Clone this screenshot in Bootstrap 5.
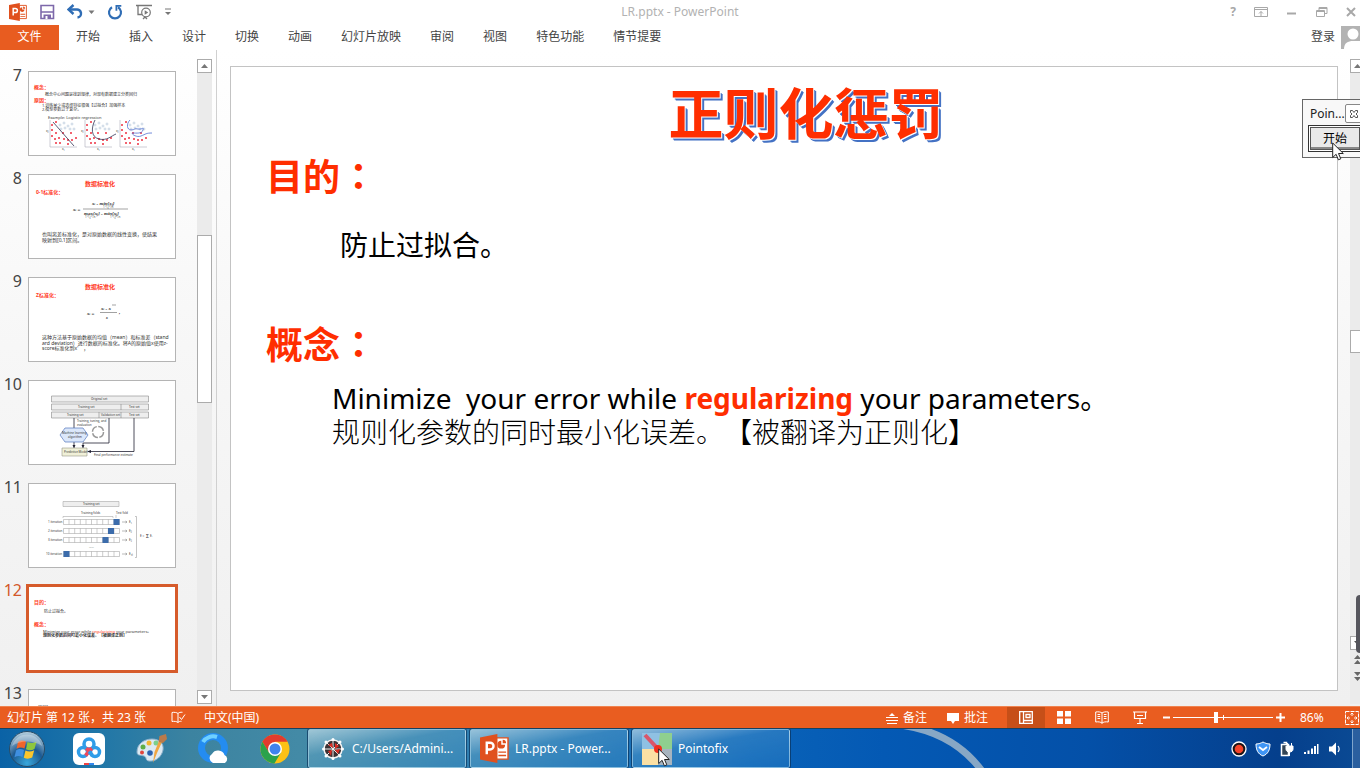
<!doctype html>
<html lang="zh-CN">
<head>
  <title>LR.pptx - PowerPoint</title>
  <meta charset="utf-8" />
  <meta name="viewport" content="width=device-width, initial-scale=1" />
  <link href="https://cdn.jsdelivr.net/npm/bootstrap@5.3.2/dist/css/bootstrap.min.css" rel="stylesheet" />
  <style>
    body { font-family: "Noto Sans", "Noto Sans CJK SC", sans-serif; font-size: 12px; line-height: 16px; color: #444; background: #fff; text-spacing-trim: space-all; }
    button { border: 0; background: none; padding: 0; color: inherit; }
    svg { display: block; flex: none; }

    /* title bar and ribbon tabs */
    .titlebar { display: grid; grid-template-columns: 1fr auto 1fr; height: 24px; align-items: center; }
    .doc-title { color: #b2b2b2; }
    .quick { gap: 12px; padding-left: 9px; }
    .win-btns { gap: 14px; color: #a8a8a8; }
    .tabs { height: 26px; gap: 29px; }
    .tabs a { color: #444; text-decoration: none; }
    .tabs .file-tab { width: 59px; height: 25px; line-height: 24px; margin-right: -12px; background: #e85c20; color: #fff; text-align: center; }
    .login { gap: 6px; }

    /* slide list */
    .workspace { min-height: 0; background: linear-gradient(#fff, #f7f7f7 45%, #f0f0f0); }
    .thumbs { width: 197px; padding-top: 16px; overflow: hidden; }
    .thumb-row { height: 103px; gap: 6px; }
    .thumb-num { width: 22px; font-size: 16px; line-height: 18px; text-align: right; }
    .thumb-btn { width: 148px; height: 85px; margin-top: 5px; background: #fff; border: 1px solid #b4b4b4; flex: none; }
    .thumb-row.current .thumb-num { color: #d2572a; }
    .thumb-row.current .thumb-btn { border-color: #d65b2b; outline: 2px solid #d65b2b; }
    .thumb-btn text { font-size: 4px; fill: #333; }
    .thumb-btn .t-h { font-size: 6px; font-weight: 700; fill: #ff3b1f; }
    .thumb-btn .t-r { font-size: 5px; font-weight: 700; fill: #ff3b1f; }
    .thumb-btn .t-b { font-size: 5px; }
    .thumb-btn .t-s { font-size: 3px; }
    .thumb-btn .t-f { font-family: "Liberation Serif", serif; font-style: italic; font-size: 5px; font-weight: 700; }

    /* scroll bars */
    .scroller { width: 15px; margin: 9px 4px 2px 0; background: #ebebeb; }
    .scroller button, .scroll-knob { background: #fff; border: 1px solid #ababab; }
    .scroller button { height: 14px; }
    .scroll-knob { height: 168px; }
    .track-above { flex: 9; }
    .track-below { flex: 16; }
    .vscroll { width: 10px; overflow: hidden; }
    .vscroll .scroll-knob { width: 15px; height: 23px; }
    .vscroll button { width: 15px; }
    .vscroll .track-above { flex: 10; }
    .vscroll .track-below { flex: 11; }

    /* slide */
    .stage { border-left: 1px solid #d0d0d0; padding: 16px 12px 15px 13px; min-width: 0; }
    .slide { background: #fff; border: 1px solid #c3c3c3; padding: 12px 35px; color: #000; font-size: 28px; line-height: 34px; overflow: hidden; }
    .slide h1 { font-size: 55px; line-height: 68px; font-weight: 700; color: #ff2e00; text-shadow: 1px 1px 0 #fff, 2px 2px 0 #4472c4, 3px 3px 0 #4472c4; padding-left: 44px; margin: 0 0 3px; }
    .slide h2 { font-size: 37px; line-height: 50px; font-weight: 700; color: #ff2e00; margin: 0; }
    .full-colon { font-family: "Noto Sans CJK TC", sans-serif; }
    .aim { padding-left: 74px; margin: 26px 0 56px; }
    .concept { padding-left: 66px; margin-top: 11px; white-space: pre; }
    .concept strong { color: #ff2e00; }
    .thin-line { font-weight: 300; }

    /* floating Pointofix window */
    .pointofix { position: absolute; left: calc(100% - 58px); top: 99px; width: 66px; height: 59px; padding: 4px 5px; background: #f8f8f8; border: 1px solid #666; color: #222; }
    .pointofix .win-name { padding-left: 2px; }
    .pointofix .close-box { width: 20px; height: 19px; border: 1px solid #888; border-radius: 2px; background: #fff; padding-left: 4px; }
    .pointofix .start-btn { width: 54px; height: 27px; margin-top: 2px; border: 1px solid #333; background: #e9e9e9; color: #000; box-shadow: inset 0 0 0 1px #fff, inset 0 0 0 2px #555, inset 0 -4px 0 #888; }
    .float-cursor { position: absolute; left: calc(100% - 28px); top: 142px; }
    .side-grip { position: absolute; left: calc(100% - 4px); top: 595px; width: 8px; height: 58px; border-radius: 4px; background: #55555c; }

    /* status bar */
    .statusbar { height: 22px; padding-right: 1px; background: #e95d20; color: #fff; border-top: 1px solid #f0834f; }
    .status-left { padding-left: 7px; gap: 18px; }
    .page-count { min-width: 146px; }
    .status-notes { gap: 20px; margin-right: 19px; }
    .status-notes button { gap: 5px; }
    .view-btn { width: 38px; height: 21px; }
    .view-btn.on { background: #c64f18; }
    .zoom-step { width: 14px; height: 21px; }
    .zoom-slider { -webkit-appearance: none; appearance: none; width: 100px; height: 11px; margin: 0; background: linear-gradient(#fff, #fff) 50% 5px / 100% 1px no-repeat, linear-gradient(#fff, #fff) 50% 50% / 1px 5px no-repeat; }
    .zoom-slider::-webkit-slider-thumb { -webkit-appearance: none; width: 4px; height: 11px; background: #fff; border: 0; }
    .zoom-val { width: 58px; padding-left: 13px; }

    /* taskbar */
    .taskbar { height: 40px; border-top: 1px solid #17405f; color: #fff; background: linear-gradient(90deg, #0a62a6 0, #1f76a8 7%, #3c83a0 14%, #438aa6 22%, #2a7cb4 38%, #0a63b8 55%, #0459b4 65%, #0450a8 80%, #053f8c 94%, #0a4a94); overflow: hidden; }
    .launch { gap: 8px; margin-right: 6px; }
    .launch button { width: 54px; height: 39px; }
    .task-btns { gap: 4px; }
    .task-btn { width: 158px; height: 39px; gap: 6px; padding-left: 9px; border: 1px solid rgba(190, 225, 240, .6); border-radius: 2px; outline: 1px solid rgba(10, 50, 90, .7); background: linear-gradient(170deg, rgba(220, 238, 245, .6), rgba(130, 190, 220, .25) 40%, rgba(80, 160, 210, .2)); }
    .wallpaper-arc { margin-left: 100px; }
    .tray { gap: 8px; margin-right: 9px; }
    .show-desktop { width: 8px; height: 39px; border-left: 1px solid #7fa5cc; background: #2a5f9f; }
    .task-cursor { position: absolute; left: 658px; top: 748px; }
  </style>
</head>
<body class="d-flex flex-column vh-100 overflow-hidden position-relative">

  <svg width="0" height="0" class="position-absolute" aria-hidden="true">
    <defs>
      <symbol id="cursor" viewBox="0 0 12 19"><path d="M.7 1v14.5l3.4-3.2 2.3 5.5 2.4-1-2.3-5.3h4.8z" fill="#fff" stroke="#222" stroke-width="1"/></symbol>
      <symbol id="ppt" viewBox="0 0 30 30">
        <path d="M17 4h12v22H17z" fill="#fff" stroke="#e0501e" stroke-width="1.5"/>
        <path d="M22 7a4 4 0 1 0 4 4h-4zM23.500 6v3.500H27A3.500 3.500 0 0 0 23.500 6M19 18h8v1.500h-8zM19 21.500h8V23h-8z" fill="#e0501e"/>
        <path d="M0 3.500 18 0v30L0 26.500z" fill="#e0501e"/>
        <path d="M7 21V9h3.500a3.500 3.500 0 0 1 0 7H7" fill="none" stroke="#fff" stroke-width="2.500"/>
      </symbol>
      <symbol id="crosses" viewBox="0 0 30 30">
        <path d="M1 0v27h27" fill="none" stroke="#99a" stroke-width=".5"/>
        <path d="M2 4l2 2m0-2-2 2M6 1l2 2m0-2-2 2M2 9l2 2m0-2-2 2M2 15l2 2m0-2-2 2M6 12l2 2m0-2-2 2M5 18l2 2m0-2-2 2M9 17l2 2m0-2-2 2M6 22l2 2m0-2-2 2M10 22l2 2m0-2-2 2M14 18l2 2m0-2-2 2M18 19l2 2m0-2-2 2M18 23l2 2m0-2-2 2M22 19l2 2m0-2-2 2M26 17l2 2m0-2-2 2M13 12l2 2m0-2-2 2M21 12l2 2m0-2-2 2" stroke="#f0515f" stroke-width=".9"/>
        <g fill="none" stroke="#9db4cf" stroke-width=".5"><circle cx="11" cy="5" r="1"/><circle cx="15" cy="3" r="1"/><circle cx="19" cy="6" r="1"/><circle cx="16" cy="8" r="1"/><circle cx="23" cy="4" r="1"/><circle cx="21" cy="9" r="1"/><circle cx="25" cy="9" r="1"/><circle cx="12" cy="9" r="1"/></g>
      </symbol>
      <symbol id="fold" viewBox="0 0 58 6">
        <path d="M.5.500h56v5H.5zM6 .5v5M11.700 .5v5M17.300 .5v5M23 .5v5M28.500 .5v5M34 .5v5M39.700 .5v5M45.300 .5v5M51 .5v5" fill="#fff" stroke="#999" stroke-width=".5"/>
      </symbol>
    </defs>
  </svg>

  <header>
    <div class="titlebar">
      <div class="d-flex align-items-center quick">
        <svg width="18" height="18" aria-hidden="true"><use href="#ppt"/></svg>
        <button aria-label="保存"><svg width="16" height="16" viewBox="0 0 16 16"><path d="M2 1.500h12.500v13H2z" fill="#fff" stroke="#7d68aa" stroke-width="1.600"/><path d="M2 8h12" stroke="#7d68aa" stroke-width="1.500"/><path d="M4.500 10.500h7.500V15H4.500z" fill="#7d68aa"/><path d="M6.500 12h2v3h-2z" fill="#fff"/></svg></button>
        <button aria-label="撤消" class="d-flex align-items-center"><svg width="28" height="16" viewBox="0 0 28 16"><path d="M3 5.500h6.500a4 4 0 0 1 1 8" fill="none" stroke="#2f6db5" stroke-width="2.400"/><path d="M6.500 1 1.500 5.500l5 4.500" fill="none" stroke="#2f6db5" stroke-width="2.400"/><path d="M21.500 6.500h6L24.500 10z" fill="#777"/></svg></button>
        <button aria-label="重复"><svg width="16" height="16" viewBox="0 0 16 16"><path d="M5 3.200a6 6 0 1 0 6 0" fill="none" stroke="#2f6db5" stroke-width="2.200"/><path d="M8.500 1h5.800v1.800h-4v4H8.500z" fill="#2f6db5"/></svg></button>
        <button aria-label="从头开始放映"><svg width="18" height="16" viewBox="0 0 18 16"><path d="M1 1.500h16M3 2v8.500h4M8 15l2-2 2 2" fill="none" stroke="#777" stroke-width="1.300"/><circle cx="11" cy="8.500" r="4.300" fill="#fff" stroke="#777" stroke-width="1.200"/><path d="M9.700 6.200v4.600l3.500-2.300z" fill="#777"/></svg></button>
        <button aria-label="自定义快速访问工具栏"><svg width="6" height="8" viewBox="0 0 6 8"><path d="M0 1h6" stroke="#777"/><path d="M0 4h6L3 7z" fill="#777"/></svg></button>
      </div>
      <div class="doc-title">LR.pptx - PowerPoint</div>
      <div class="d-flex align-items-center justify-content-end win-btns">
        <button aria-label="帮助" class="fw-bold px-1">?</button>
        <button aria-label="功能区显示选项"><svg width="14" height="12" viewBox="0 0 14 12"><path d="M.5 1.500h13v9H.5zM.5 3.500h13M7 10V5.500M5 7.500l2-2 2 2" fill="none" stroke="#a8a8a8"/></svg></button>
        <button aria-label="最小化" class="ms-1"><svg width="12" height="12" viewBox="0 0 12 12"><path d="M1 7.500h9" stroke="#a8a8a8" stroke-width="2"/></svg></button>
        <button aria-label="还原" class="ms-1"><svg width="12" height="12" viewBox="0 0 12 12"><path d="M.5 4.500h8v6h-8zM.5 5.500h8M3 4V1.500h8v6H9M3 2.500h8" fill="none" stroke="#a8a8a8"/></svg></button>
        <button aria-label="关闭" class="ms-1 me-1"><svg width="10" height="12" viewBox="0 0 10 12"><path d="m1 2 8 8m0-8-8 8" stroke="#a8a8a8" stroke-width="2"/></svg></button>
      </div>
    </div>
    <nav class="d-flex align-items-center tabs">
      <a href="#" class="file-tab">文件</a>
      <a href="#">开始</a>
      <a href="#">插入</a>
      <a href="#">设计</a>
      <a href="#">切换</a>
      <a href="#">动画</a>
      <a href="#">幻灯片放映</a>
      <a href="#">审阅</a>
      <a href="#">视图</a>
      <a href="#">特色功能</a>
      <a href="#">情节提要</a>
      <a href="#" class="ms-auto d-flex align-items-center login">登录
        <svg width="19" height="23" viewBox="0 0 19 23"><path d="M0 0h19v23H0z" fill="#b3b3b3"/><circle cx="12" cy="8" r="5.500" fill="#fff"/><path d="M3 23c0-6 4-8 9-8h7v8z" fill="#fff"/></svg>
      </a>
    </nav>
  </header>

  <main class="d-flex flex-grow-1 workspace">
    <ol class="list-unstyled mb-0 thumbs">
      <li class="d-flex align-items-start thumb-row">
        <span class="thumb-num">7</span>
        <button class="thumb-btn" aria-label="幻灯片 7">
          <svg viewBox="0 0 146 83">
            <text x="5" y="17" class="t-r">概念：</text>
            <text x="16" y="24">概念中心问题是找到规律，对现有数据建立分类回归</text>
            <text x="5" y="30" class="t-r">原因：</text>
            <text x="13" y="35">1.训练量少或选择特征很强【过拟合】加强样本</text>
            <text x="13" y="39">2.模型参数过于复杂。</text>
            <text x="19" y="47">Example: Logistic regression</text>
            <use href="#crosses" x="20" y="48" width="30" height="30"/>
            <use href="#crosses" x="55" y="48" width="30" height="30"/>
            <use href="#crosses" x="90" y="48" width="30" height="30"/>
            <path d="M24 50l21 24" stroke="#335" fill="none" stroke-width=".8"/>
            <path d="M66 48c-4 8-4 17 4 19s12-3 17-5" stroke="#335" fill="none" stroke-width=".8"/>
            <path d="M101 48c-4 4-3 10 1 10s3-2 7-1 6-3 5 1-7 3-10 3 3 5 8 3 5-3 11-3" stroke="#4f6fd0" fill="none" stroke-width=".8"/>
            <text x="33" y="78" class="t-s">x₁</text><text x="68" y="78" class="t-s">x₁</text><text x="103" y="78" class="t-s">x₁</text>
            <text x="17" y="60" class="t-s">x₂</text><text x="52" y="60" class="t-s">x₂</text><text x="87" y="60" class="t-s">x₂</text>
          </svg>
        </button>
      </li>
      <li class="d-flex align-items-start thumb-row">
        <span class="thumb-num">8</span>
        <button class="thumb-btn" aria-label="幻灯片 8">
          <svg viewBox="0 0 146 83">
            <text x="56" y="11" class="t-h">数据标准化</text>
            <text x="7" y="19" class="t-r">0-1标准化：</text>
            <text x="44" y="36" class="t-f">xᵢ =</text>
            <text x="63" y="30" class="t-f">xᵢ - min{xⱼ}</text>
            <path d="M54 34h45" stroke="#444" stroke-width=".5"/>
            <text x="55" y="40" class="t-f">max{xⱼ} - min{xⱼ}</text>
            <text x="74" y="33" class="t-s">1≤j≤n</text><text x="56" y="43" class="t-s">1≤j≤n</text><text x="81" y="43" class="t-s">1≤j≤n</text>
            <text x="13" y="61" class="t-b">也叫离差标准化，是对原始数据的线性变换，使结果</text>
            <text x="13" y="67" class="t-b">映射到[0,1]区间。</text>
          </svg>
        </button>
      </li>
      <li class="d-flex align-items-start thumb-row">
        <span class="thumb-num">9</span>
        <button class="thumb-btn" aria-label="幻灯片 9">
          <svg viewBox="0 0 146 83">
            <text x="56" y="11" class="t-h">数据标准化</text>
            <text x="7" y="19" class="t-r">Z标准化：</text>
            <text x="58" y="37" class="t-f">xᵢ =</text>
            <text x="72" y="32" class="t-f">xᵢ - x</text>
            <path d="M71 34.500h17M83 27h4" stroke="#444" stroke-width=".5"/>
            <text x="77" y="41" class="t-f">s</text><text x="90" y="36" class="t-f">,</text>
            <text x="13" y="61" class="t-b">这种方法基于原始数据的均值（mean）和标准差（stand</text>
            <text x="13" y="67" class="t-b">ard deviation）进行数据的标准化。将A的原始值x使用z-</text>
            <text x="13" y="72" class="t-b">score标准化到x'　，</text>
          </svg>
        </button>
      </li>
      <li class="d-flex align-items-start thumb-row">
        <span class="thumb-num">10</span>
        <button class="thumb-btn" aria-label="幻灯片 10">
          <svg viewBox="0 0 146 83">
            <g fill="#eee" stroke="#888" stroke-width=".6"><path d="M22.500 15h97v6h-97zM22.500 23h97v6h-97zM92 23v6M22.500 31h97v6h-97zM70 31v6M92 31v6"/></g>
            <text x="62" y="19" class="t-s">Original set</text>
            <text x="49" y="27" class="t-s">Training set</text><text x="100" y="27" class="t-s">Test set</text>
            <text x="38" y="35" class="t-s">Training set</text><text x="72" y="35" class="t-s">Validation set</text><text x="100" y="35" class="t-s">Test set</text>
            <path d="M45 37v30M80 37v25H54v5M105 37v33.500H59" fill="none" stroke="#223" stroke-width=".8"/>
            <path d="M43.500 64h3L45 67zM52.500 64h3L54 67zM62 69v3l-4-1.500z" fill="#223"/>
            <path d="M31 54l5-7h18l5 7-5 7H36z" fill="#dbe7fa" stroke="#57b" stroke-width=".7"/>
            <text x="33" y="53" class="t-s">Machine learning</text><text x="39" y="57" class="t-s">algorithm</text>
            <text x="48" y="41" class="t-s">Training, tuning, and</text><text x="48" y="45" class="t-s">evaluation</text>
            <circle cx="69" cy="51" r="5.500" fill="none" stroke="#999" stroke-width="1.500" stroke-dasharray="7 1.500"/>
            <path d="M33 67h25v8H33z" fill="#f0f0d8" stroke="#998" stroke-width=".6"/>
            <text x="35" y="72" class="t-s">Predictive Model</text>
            <text x="65" y="75" class="t-s">Final performance estimate</text>
          </svg>
        </button>
      </li>
      <li class="d-flex align-items-start thumb-row">
        <span class="thumb-num">11</span>
        <button class="thumb-btn" aria-label="幻灯片 11">
          <svg viewBox="0 0 146 83">
            <path d="M34 17.500h56v5H34z" fill="#eee" stroke="#999" stroke-width=".5"/>
            <text x="54" y="21" class="t-s">Training set</text>
            <text x="52" y="30" class="t-s">Training folds</text><text x="87" y="30" class="t-s">Test fold</text>
            <path d="M34 34v-1.500h50V34M87 31v3" fill="none" stroke="#999" stroke-width=".5"/>
            <use href="#fold" x="34" y="35" width="58" height="6"/><use href="#fold" x="34" y="44" width="58" height="6"/><use href="#fold" x="34" y="53" width="58" height="6"/><use href="#fold" x="34" y="67" width="58" height="6"/>
            <path d="M84.500 35h6v6h-6zM79 44h6v6h-6zM73.500 53h6v6h-6zM34.500 67h6v6h-6z" fill="#3c6cab"/>
            <text x="19" y="39" class="t-s">1 iteration</text><text x="19" y="48" class="t-s">2 iteration</text><text x="19" y="57" class="t-s">3 iteration</text><text x="17" y="71" class="t-s">10 iteration</text>
            <text x="60" y="64" class="t-s">......</text>
            <path d="M93 38h5m-1.500-1 1.500 1-1.500 1M93 47h5m-1.500-1 1.500 1-1.500 1M93 56h5m-1.500-1 1.500 1-1.500 1M93 70h5m-1.500-1 1.500 1-1.500 1" fill="none" stroke="#777" stroke-width=".5"/>
            <text x="100" y="39" class="t-s">E₁</text><text x="100" y="48" class="t-s">E₂</text><text x="100" y="57" class="t-s">E₃</text><text x="100" y="71" class="t-s">E₁₀</text>
            <path d="M106 32.500h1.500v41H106" fill="none" stroke="#888" stroke-width=".5"/>
            <text x="111" y="53" class="t-s">E =</text><text x="117" y="54" class="t-b">Σ</text><text x="121" y="53" class="t-s">Eᵢ</text>
          </svg>
        </button>
      </li>
      <li class="d-flex align-items-start thumb-row current">
        <span class="thumb-num">12</span>
        <button class="thumb-btn" aria-label="幻灯片 12">
          <svg viewBox="0 0 146 83">
            <text x="5" y="17" class="t-r">目的：</text>
            <text x="15" y="26">防止过拟合。</text>
            <text x="5" y="39" class="t-r">概念：</text>
            <text x="14" y="46">Minimize your error while <tspan fill="#ff3b1f">regularizing</tspan> your parameters。</text>
            <text x="14" y="50" font-weight="700">规则化参数的同时最小化误差。【被翻译正则】</text>
          </svg>
        </button>
      </li>
      <li class="d-flex align-items-start thumb-row">
        <span class="thumb-num">13</span>
        <button class="thumb-btn" aria-label="幻灯片 13">
          <svg viewBox="0 0 146 83"><text x="9" y="19" class="t-b">原因：</text></svg>
        </button>
      </li>
    </ol>

    <div class="d-flex flex-column scroller">
      <button aria-label="向上滚动" class="d-flex align-items-center justify-content-center"><svg width="7" height="4" viewBox="0 0 7 4"><path d="M0 4h7L3.500 0z" fill="#777"/></svg></button>
      <div class="track-above"></div>
      <div class="scroll-knob"></div>
      <div class="track-below"></div>
      <button aria-label="向下滚动" class="d-flex align-items-center justify-content-center"><svg width="7" height="4" viewBox="0 0 7 4"><path d="M0 0h7L3.500 4z" fill="#777"/></svg></button>
    </div>

    <section class="d-flex flex-grow-1 stage">
      <article class="flex-grow-1 slide">
        <h1 class="text-center">正则化惩罚</h1>
        <h2>目的<span class="full-colon" lang="zh-TW">：</span></h2>
        <p class="aim">防止过拟合。</p>
        <h2>概念<span class="full-colon" lang="zh-TW">：</span></h2>
        <p class="concept mb-0">Minimize  your error while <strong>regularizing</strong> your parameters。
<span class="thin-line">规则化参数的同时最小化误差。【被翻译为正则化】</span></p>
      </article>
    </section>

    <div class="d-flex flex-column scroller vscroll me-0">
      <button aria-label="上一行" class="d-flex align-items-center justify-content-center"><svg width="7" height="4" viewBox="0 0 7 4"><path d="M0 4h7L3.500 0z" fill="#777"/></svg></button>
      <div class="track-above"></div>
      <div class="scroll-knob"></div>
      <div class="track-below"></div>
      <button aria-label="下一行" class="d-flex align-items-center justify-content-center"><svg width="7" height="4" viewBox="0 0 7 4"><path d="M0 0h7L3.500 4z" fill="#555"/></svg></button>
      <svg width="15" height="54" viewBox="0 0 15 54" aria-label="上一张 下一张"><path d="M4 9l3.500-4L11 9zM4 14l3.500-4L11 14zM4 22l3.500 4L11 22zM4 27l3.500 4L11 27z" fill="#666"/></svg>
    </div>
  </main>

  <footer>
    <div class="d-flex align-items-center statusbar">
      <div class="d-flex align-items-center status-left">
        <span class="page-count">幻灯片 第 12 张，共 23 张</span>
        <button aria-label="拼写检查"><svg width="15" height="13" viewBox="0 0 15 13"><path d="M7 2.500v9M7 2.500C6 1.500 3 1 1 1.500v9c2-.5 5 0 6 1 1-1 2-1.300 3.500-1.200M7 2.500C8 1.500 9.500 1 11.500 1.300M8.500 6l2 2.500L14 3.500" fill="none" stroke="#fff"/></svg></button>
        <span>中文(中国)</span>
      </div>
      <div class="d-flex align-items-center ms-auto status-notes">
        <button class="d-flex align-items-center"><svg width="12" height="12" viewBox="0 0 12 12"><path d="M0 5.500h12M0 8.500h12M1 11.500h10" stroke="#fff"/><path d="M3 4h6L6 1z" fill="#fff"/></svg>备注</button>
        <button class="d-flex align-items-center"><svg width="12" height="12" viewBox="0 0 12 12"><path d="M0 1h12v8H8l-2 3-2-3H0z" fill="#fff"/></svg>批注</button>
      </div>
      <button class="d-flex align-items-center justify-content-center view-btn on" aria-label="普通视图"><svg width="14" height="13" viewBox="0 0 14 13"><path d="M.7.700h12.600v11.600H.7zM4.500 1v11M7 3.500h4v3H7zM5 9.500h8" fill="none" stroke="#fff" stroke-width="1.300"/></svg></button>
      <button class="d-flex align-items-center justify-content-center view-btn" aria-label="幻灯片浏览"><svg width="14" height="13" viewBox="0 0 14 13"><path d="M0 0h6v5.500H0zM8 0h6v5.500H8zM0 7.500h6V13H0zM8 7.500h6V13H8z" fill="#fff"/></svg></button>
      <button class="d-flex align-items-center justify-content-center view-btn" aria-label="阅读视图"><svg width="14" height="13" viewBox="0 0 14 13"><path d="M7 2v10.500M7 2C6 1 3 .5.7 1v10c2.300-.5 5.300 0 6.300 1.200C8 11 11 10.500 13.300 11V1C11 .5 8 1 7 2M2.500 3.500h2.700M2.500 5.500h2.700M2.500 7.500h2.700M8.800 3.500h2.700M8.800 5.500h2.700M8.800 7.500h2.700" fill="none" stroke="#fff"/></svg></button>
      <button class="d-flex align-items-center justify-content-center view-btn" aria-label="幻灯片放映视图"><svg width="14" height="13" viewBox="0 0 14 13"><path d="M0 1h14M1.500 1.500v6h11v-6M7 7.500V12M4 12.500h6M4 4.500h6" fill="none" stroke="#fff" stroke-width="1.200"/></svg></button>
      <button class="d-flex align-items-center justify-content-center zoom-step" aria-label="缩小"><svg width="7" height="9" viewBox="0 0 7 9"><path d="M0 4.500h7" stroke="#fff" stroke-width="2"/></svg></button>
      <input type="range" class="zoom-slider" min="0" max="100" value="43" aria-label="缩放" />
      <button class="d-flex align-items-center justify-content-center zoom-step" aria-label="放大"><svg width="9" height="9" viewBox="0 0 9 9"><path d="M0 4.500h9M4.500 0v9" stroke="#fff" stroke-width="2"/></svg></button>
      <span class="zoom-val">86%</span>
      <button aria-label="适应窗口"><svg width="14" height="14" viewBox="0 0 14 14"><path d="M.5.500h13v13H.5z" fill="none" stroke="#fff" stroke-dasharray="4 1"/><path d="M7 2v3M7 9v3M2 7h3M9 7h3M5.500 3.500 7 2l1.500 1.500M5.500 10.500 7 12l1.500-1.500M3.500 5.500 2 7l1.500 1.500M10.500 5.500 12 7l-1.500 1.500" fill="none" stroke="#fff" stroke-width=".9"/></svg></button>
    </div>

    <div class="d-flex align-items-center taskbar">
      <div class="d-flex launch">
        <button class="d-flex align-items-center justify-content-center" aria-label="开始菜单"><svg width="38" height="38" viewBox="0 0 38 38"><defs><radialGradient id="orb" cx=".5" cy=".9" r=".9"><stop offset="0" stop-color="#39a8dc"/><stop offset=".5" stop-color="#1c5a92"/><stop offset="1" stop-color="#b9d2e0"/></radialGradient></defs><circle cx="19" cy="19" r="17.500" fill="url(#orb)" stroke="#284b66"/><path d="M10 12c3-2 5-2 8-.5l-1.500 7c-3-1.500-5-1.500-8 .3z" fill="#f0652a"/><path d="M19.500 12c3 1.500 5.500 1.500 9-.3l-2 7.300c-3 1.500-5.500 1.500-8.500.3z" fill="#8dc63f"/><path d="M8 20.500c3-2 5-1.800 8-.5l-1.500 7c-3-1.400-5-1.300-8 .3z" fill="#3f8fe0"/><path d="M17.500 20.500c3 1.500 5.500 1.300 8.700-.3l-2 7.300c-3 1.500-5.500 1.500-8.400.2z" fill="#fcc62c"/><path d="M4 16a15.500 15.500 0 0 1 30 0c-8-6-22-6-30 0" fill="#fff" opacity=".3"/></svg></button>
        <button class="d-flex align-items-center justify-content-center" aria-label="百度网盘"><svg width="32" height="32" viewBox="0 0 32 32"><rect width="32" height="32" rx="6" fill="#fff"/><g fill="none" stroke-width="3.500"><circle cx="16" cy="11" r="5" stroke="#2f9de8"/><circle cx="10" cy="19" r="4.500" stroke="#2f9de8"/><circle cx="22" cy="19" r="4.500" stroke="#2f9de8"/><path d="M13 15.500a5 5 0 0 0 6 0M12.500 22.500l3.500-4" stroke="#ee4a5c"/><path d="M16 18.500l3.500 4" stroke="#2f9de8"/></g><path d="M11 30h5v2h-5z" fill="#e44"/><path d="M16 30h5v2h-5z" fill="#38e"/></svg></button>
        <button class="d-flex align-items-center justify-content-center" aria-label="画图"><svg width="32" height="32" viewBox="0 0 32 32"><path d="M2 19C2 11 9 6 17 6s12 5 11 11-7 12-14 11c-4-.5-2-4-5-5s-7 0-7-4" fill="#dce9f2" stroke="#8fb2cc"/><circle cx="8" cy="14" r="2.500" fill="#5fae46"/><circle cx="14" cy="10" r="2.500" fill="#f2b632"/><circle cx="21" cy="10" r="2.500" fill="#7ccf8b"/><circle cx="7" cy="19.500" r="2" fill="#e2453c"/><circle cx="15" cy="20" r="2.800" fill="#2a62b0"/><path d="m18 30 1.500-11L24 8l3 1-5 11z" fill="#f0a541"/><path d="m23.500 9 1-6L31 1l1 5-4 4z" fill="#b97a4b"/></svg></button>
        <button class="d-flex align-items-center justify-content-center" aria-label="QQ浏览器"><svg width="32" height="32" viewBox="0 0 32 32"><circle cx="16" cy="15" r="11.500" fill="none" stroke="#248cf0" stroke-width="7"/><path d="M6 9a12 12 0 0 1 14-5" fill="none" stroke="#6fd0ff" stroke-width="4"/><path d="M16 30a5 5 0 0 1-1-9 7 7 0 0 1 12.500 1A4.500 4.500 0 0 1 28 30z" fill="#fff"/></svg></button>
        <button class="d-flex align-items-center justify-content-center" aria-label="Chrome"><svg width="30" height="30" viewBox="0 0 30 30"><circle cx="15" cy="15" r="14.500" fill="#fbc116"/><path d="M2.400 7.800A14.500 14.500 0 0 1 27.600 7.800H15L8.800 18.600z" fill="#e33b2e"/><path d="M2.400 7.800a14.500 14.500 0 0 0 12 21.700L21 18.500H9z" fill="#2ba24c"/><circle cx="15" cy="15" r="7" fill="#fff"/><circle cx="15" cy="15" r="5.500" fill="#3f83ee"/></svg></button>
      </div>
      <div class="d-flex task-btns">
        <button class="d-flex align-items-center task-btn"><svg width="28" height="24" viewBox="0 0 28 24"><circle cx="15" cy="12" r="9" fill="#3a3234" stroke="#f2f2f2" stroke-width="1.500"/><path d="M15 3v18M6 12h18M9 6l12 12M21 6 9 18" stroke="#eee" stroke-width="1"/><path d="m10 8 4-2 1 5zM17 13l5-1-2 5zM10 14l4-1-1 6zM17 6l4 3-4 3z" fill="#d92a22"/><g fill="#fff"><circle cx="15" cy="2.500" r="1.500"/><circle cx="15" cy="21.500" r="1.500"/><circle cx="5.500" cy="12" r="1.500"/><circle cx="24.500" cy="12" r="1.500"/><circle cx="8" cy="5" r="1.500"/><circle cx="22" cy="5" r="1.500"/><circle cx="8" cy="19" r="1.500"/><circle cx="22" cy="19" r="1.500"/></g></svg>C:/Users/Admini...</button>
        <button class="d-flex align-items-center task-btn"><svg width="29" height="29"><use href="#ppt"/></svg>LR.pptx - Power...</button>
        <button class="d-flex align-items-center task-btn"><svg width="30" height="32" viewBox="0 0 30 32"><path d="M0 0h30v32H0z" fill="#8fc1e3"/><path d="M18 0h12v16H16z" fill="#8fcf8f"/><path d="M0 16h16v16H0z" fill="#fbe0a4"/><path d="M16 16h14v16H16z" fill="#a7b4bf"/><path d="m3 2 13 14" stroke="#d9566a" stroke-width="4"/><circle cx="16" cy="16" r="4" fill="#f0301e"/></svg>Pointofix</button>
      </div>
      <svg class="wallpaper-arc" width="110" height="39" viewBox="0 0 110 39" aria-hidden="true"><path d="M10-4C40 0 70 12 92 42" fill="none" stroke="#a9bccb" stroke-width="7" opacity=".8"/></svg>
      <div class="d-flex align-items-center ms-auto tray">
        <svg width="16" height="16" viewBox="0 0 16 16"><circle cx="8" cy="8" r="7" fill="#1d1416" stroke="#fff" stroke-width="1.300"/><circle cx="8" cy="8" r="4.300" fill="#f5442a"/></svg>
        <svg width="16" height="16" viewBox="0 0 16 16"><path d="M1 3c3 0 5-1 7-2 2 1 4 2 7 2 0 6-2 10-7 12C3 13 1 9 1 3" fill="#3f95f5" stroke="#fff"/><path d="m4 6 4 3 4-3" fill="none" stroke="#fff" stroke-width="1.800"/></svg>
        <svg width="16" height="16" viewBox="0 0 16 16"><path d="M2.500 3.500h7v11h-7zM4.500 1.500h3v2" fill="#345" stroke="#fff" stroke-width="1.500"/><path d="M7 5h7v3c0 2-1.500 3-3.500 3S7 10 7 8zM8.500 2v3M12.500 2v3M10.500 11v4" fill="#fff" stroke="#fff"/></svg>
        <svg width="16" height="16" viewBox="0 0 16 16"><path d="M1 13v-2h2v2zM4.500 13V9.500h2V13zM8 13V7.500h2V13zM11 13V5h2v8zM14 13V3h1.500v10z" fill="#fff"/></svg>
        <svg width="16" height="16" viewBox="0 0 16 16"><path d="M2 5.500h3L9 1.500v13l-4-4H2z" fill="#fff"/><path d="M11 5c1.500 2 1.500 4 0 6" fill="none" stroke="#fff" stroke-width="1.200"/></svg>
      </div>
      <button class="show-desktop" aria-label="显示桌面"></button>
    </div>
  </footer>

  <div class="side-grip"></div>
  <div class="pointofix">
    <div class="d-flex justify-content-between align-items-center">
      <span class="win-name">Poin...</span>
      <button class="close-box" aria-label="关闭 Pointofix"><svg width="8" height="8" viewBox="0 0 8 8"><path d="M.5.500h2L4 2.500 5.500.500h2v2L6 4l1.500 1.500v2h-2L4 5.500 2.500 7.500h-2v-2L2 4 .5 2.500z" fill="#fff" stroke="#555"/></svg></button>
    </div>
    <button class="start-btn">开始</button>
  </div>
  <svg class="float-cursor" width="12" height="19" aria-hidden="true"><use href="#cursor"/></svg>
  <svg class="task-cursor" width="12" height="19" aria-hidden="true"><use href="#cursor"/></svg>

  <script src="https://cdn.jsdelivr.net/npm/bootstrap@5.3.2/dist/js/bootstrap.bundle.min.js"></script>
</body>
</html>
